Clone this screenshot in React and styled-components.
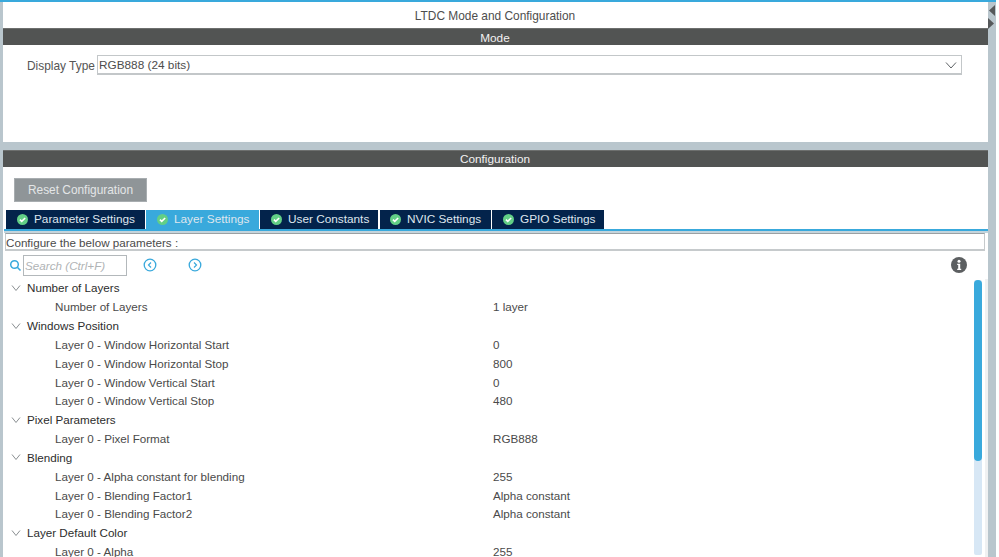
import React from "react";
import styled, { createGlobalStyle } from "styled-components";

const Global = createGlobalStyle`
  html, body { margin: 0; padding: 0; width: 999px; height: 557px; overflow: hidden; background: #fff; }
  body, input { font-family: "Liberation Sans", Arial, sans-serif; }
`;
const Page = styled.div`
  width: 999px; height: 557px; display: flex; flex-direction: column; overflow: hidden; background: #fff;
`;
const TopLine = styled.div`height: 2px; background: #39a9dc; flex: none; width: 996px;`;
const Body = styled.div`flex: 1; display: flex; min-height: 0;`;
const LeftRail = styled.div`width: 3px; background: #b9c6cd; flex: none;`;
const Main = styled.div`width: 985px; flex: none; display: flex; flex-direction: column; min-height: 0;`;
const RightRail = styled.div`
  width: 8px; flex: none; background: #b9c6cd; display: flex; flex-direction: column; gap: 2px; padding-top: 3px;
  svg { display: block; }
`;
const Title = styled.div`
  height: 26px; box-sizing: border-box; padding: 2px 1px 0 0; display: flex; align-items: center; justify-content: center; font-size: 11.9px; color: #4d4d4d; white-space: nowrap;
`;
const SectionHeader = styled.div`
  height: 17px; background: #525453; color: #f2f2f2; font-size: 11.8px; display: flex; align-items: center; justify-content: center; flex: none;
  border-top: 1px solid #6d6f6e; box-sizing: border-box; padding: ${p => p.$shift || 0}px 1px 0 0;
`;
const ModePanel = styled.div`height: 97px; flex: none; padding: 10px 26px 0 24px; box-sizing: border-box; display: flex; align-items: flex-start; gap: 2px;`;
const FieldLabel = styled.span`font-size: 11.9px; color: #555; line-height: 22px; white-space: nowrap; width: 68px; flex: none;`;
const Select = styled.div`
  width: 865px; height: 20px; box-sizing: border-box; border: 1px solid #c3c7c9; border-bottom-width: 2px; display: flex; align-items: center; justify-content: space-between;
  font-size: 11.8px; color: #4d4d4d; padding: 1px 4px 0 1px;
`;
const Gap = styled.div`height: 8px; flex: none; background: #b9c6cd;`;
const ResetRow = styled.div`padding: 11px 0 0 11px; height: 43px; box-sizing: border-box; flex: none;`;
const ResetButton = styled.button`
  width: 133px; height: 24px; background: #8f9598; border: 1px solid #a8adb0; color: #e4e6e7; font-size: 11.9px; font-family: inherit; padding: 0; display: block;
`;
const Tabs = styled.div`display: flex; height: 19px; padding-left: 3px; flex: none; gap: 1px;`;
const Tab = styled.div`
  width: ${p => p.$w}px; box-sizing: border-box; background: ${p => (p.$active ? "#39a9dc" : "#03234b")};
  color: #dfe6ee; font-size: 11.8px; display: flex; align-items: center; gap: 6px; padding: 0 0 1px ${p => p.$pad}px; margin-right: ${p => p.$mr || 0}px; white-space: nowrap;
  svg { flex: none; }
`;
const TabRule = styled.div`height: 2px; background: #39a9dc; flex: none; border-bottom: 2px solid #c4d4dc; margin-left: 1px;`;
const ConfigureBox = styled.div`
  margin: 0 3px 0 2px; height: 18px; box-sizing: border-box; border: 1px solid #c6cacc; border-bottom-width: 2px; border-top-color: #9aa0a3; font-size: 11.65px; color: #4a4a4a;
  display: flex; align-items: center; flex: none; white-space: nowrap; padding-top: 1px;
`;
const Toolbar = styled.div`height: 27.5px; flex: none; display: flex; align-items: center; padding: 1px 21px 0 6px; box-sizing: border-box;`;
const SearchInput = styled.div`
  width: 104px; height: 21px; margin-left: 1px; box-sizing: border-box; border: 1px solid #b3b8bb; font-size: 11.7px; font-style: italic; color: #b0b3b5; display: flex; align-items: center; padding-left: 1px; white-space: nowrap;
`;
const NavIcon = styled.span`display: flex; margin-left: ${p => p.$ml}px;`;
const InfoIcon = styled.span`display: flex; margin-left: auto;`;
const TreeArea = styled.div`flex: 1; display: flex; min-height: 0; overflow: hidden;`;
const Tree = styled.div`flex: 1; overflow: hidden; display: flex; flex-direction: column; min-width: 0;`;
const GroupRow = styled.div`
  flex: none; height: 18.83px; display: flex; align-items: center; font-size: 11.65px; color: #2d2d2d; padding-left: 7px; white-space: nowrap;
  svg { margin-right: 5px; flex: none; }
`;
const ParamRow = styled.div`flex: none; height: 18.83px; display: flex; align-items: center; font-size: 11.65px; color: #4a4a4a; padding-left: 52px; white-space: nowrap;`;
const ParamName = styled.span`width: 438px; flex: none;`;
const Track = styled.div`width: 8px; height: 275px; background: #d7e7f5; flex: none; margin: 1.5px 3px 0 0; border-radius: 2px;`;
const Thumb = styled.div`width: 8px; height: 181px; background: #39a9dc; border-radius: 4px;`;
const Band = styled.div`width: 3px; background: #f0f1f2; flex: none; align-self: stretch;`;

const Check = () => (
  <svg width="11" height="11" viewBox="0 0 12 12"><circle cx="6" cy="6" r="6" fill="#62cf86" /><path d="M3.2 6.1 5.2 8.1 8.9 4.4" fill="none" stroke="#fff" strokeWidth="1.7" /></svg>
);
const Chevron = ({ color = "#8a8f92", inset = 2 }) => (
  <svg width="12" height="8" viewBox="0 0 12 8"><path d={`M${inset} 1.5 6 ${8 - inset / 2 - 0.5} ${12 - inset} 1.5`} fill="none" stroke={color} strokeWidth="1" /></svg>
);
const Nav = ({ dir }) => (
  <svg width="14" height="14" viewBox="0 0 14 14"><circle cx="7" cy="7" r="5.8" fill="none" stroke="#39a9dc" strokeWidth="1.3" /><path d={dir === "l" ? "M8 4.5 5.5 7 8 9.5" : "M6 4.5 8.5 7 6 9.5"} fill="none" stroke="#39a9dc" strokeWidth="1.2" /></svg>
);

const tree = [
  ["Number of Layers", [["Number of Layers", "1 layer"]]],
  ["Windows Position", [
    ["Layer 0 - Window Horizontal Start", "0"],
    ["Layer 0 - Window Horizontal Stop", "800"],
    ["Layer 0 - Window Vertical Start", "0"],
    ["Layer 0 - Window Vertical Stop", "480"],
  ]],
  ["Pixel Parameters", [["Layer 0 - Pixel Format", "RGB888"]]],
  ["Blending", [
    ["Layer 0 - Alpha constant for blending", "255"],
    ["Layer 0 - Blending Factor1", "Alpha constant"],
    ["Layer 0 - Blending Factor2", "Alpha constant"],
  ]],
  ["Layer Default Color", [["Layer 0 - Alpha", "255"]]],
];
const tabs = [
  ["Parameter Settings", 139, 11, false, 0],
  ["Layer Settings", 113, 11, true, 0],
  ["User Constants", 118, 11, false, 1],
  ["NVIC Settings", 111, 10, false, 0],
  ["GPIO Settings", 112, 11, false, 0],
];

export default function App() {
  return (
    <Page>
      <Global />
      <TopLine />
      <Body>
        <LeftRail />
        <Main>
          <Title>LTDC Mode and Configuration</Title>
          <SectionHeader $shift={2}>Mode</SectionHeader>
          <ModePanel>
            <FieldLabel>Display Type</FieldLabel>
            <Select>RGB888 (24 bits)<Chevron color="#5f6366" inset={1} /></Select>
          </ModePanel>
          <Gap />
          <SectionHeader>Configuration</SectionHeader>
          <ResetRow><ResetButton>Reset Configuration</ResetButton></ResetRow>
          <Tabs>
            {tabs.map(([t, w, p, a, mr]) => (
              <Tab key={t} $w={w} $pad={p} $active={a} $mr={mr}><Check />{t}</Tab>
            ))}
          </Tabs>
          <TabRule />
          <ConfigureBox>Configure the below parameters :</ConfigureBox>
          <Toolbar>
            <svg width="13" height="13" viewBox="0 0 13 13"><circle cx="5.5" cy="5.5" r="3.8" fill="none" stroke="#39a9dc" strokeWidth="1.5" /><path d="M8.3 8.3 11.5 11.5" stroke="#39a9dc" strokeWidth="1.6" /></svg>
            <SearchInput>Search (Ctrl+F)</SearchInput>
            <NavIcon $ml={16}><Nav dir="l" /></NavIcon>
            <NavIcon $ml={31}><Nav dir="r" /></NavIcon>
            <InfoIcon>
              <svg width="16" height="16" viewBox="0 0 16 16"><circle cx="8" cy="8" r="8" fill="#5c5f61" /><circle cx="8" cy="4.2" r="1.5" fill="#fff" /><path d="M6.2 6.8H9.2V11.8H10.2V13H6.2V11.8H7.2V8H6.2Z" fill="#fff" /></svg>
            </InfoIcon>
          </Toolbar>
          <TreeArea>
            <Tree>
              {tree.map(([g, rows]) => (
                <React.Fragment key={g}>
                  <GroupRow><Chevron />{g}</GroupRow>
                  {rows.map(([n, v]) => (
                    <ParamRow key={n}><ParamName>{n}</ParamName>{v}</ParamRow>
                  ))}
                </React.Fragment>
              ))}
            </Tree>
            <Track><Thumb /></Track>
            <Band />
          </TreeArea>
        </Main>
        <RightRail>
          <svg width="8" height="11" viewBox="0 0 8 11"><path d="M7 0V11L1 5.5Z" fill="#55585a" /></svg>
          <svg width="8" height="11" viewBox="0 0 8 11"><path d="M0 0V11L6 5.5Z" fill="#55585a" /></svg>
        </RightRail>
      </Body>
    </Page>
  );
}
